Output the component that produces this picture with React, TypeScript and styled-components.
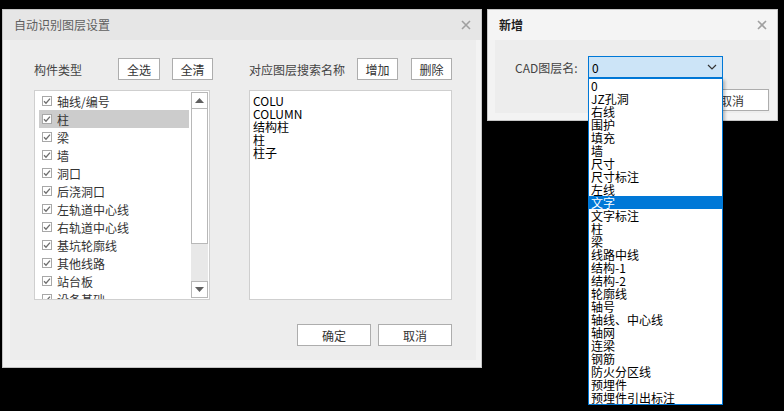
import React from 'react';
import styled, { createGlobalStyle } from 'styled-components';

const GlobalStyle = createGlobalStyle`
  html, body {
    margin: 0;
    padding: 0;
    background: #000;
  }
  body {
    font-family: "Noto Sans CJK SC", "Noto Sans", sans-serif;
    font-size: 12px;
    color: #333;
  }
`;

const Desktop = styled.div`
  position: relative;
  width: 784px;
  height: 411px;
  overflow: hidden;
  background: #000;
`;

const Window = styled.div<{ $left: number; $top: number; $width: number; $height: number }>`
  position: absolute;
  left: ${p => p.$left}px;
  top: ${p => p.$top}px;
  width: ${p => p.$width}px;
  height: ${p => p.$height}px;
  box-sizing: border-box;
  border: 1px solid #c6c6c6;
  background: #f3f3f3;
  display: flex;
  flex-direction: column;
`;

const TitleBar = styled.div<{ $bg: string }>`
  height: 30px;
  flex: none;
  display: flex;
  align-items: center;
  justify-content: space-between;
  padding: 0 10px 0 11px;
  background: ${p => p.$bg};
`;

const Title = styled.span<{ $bold?: boolean }>`
  font-size: 12px;
  line-height: 14px;
  color: ${p => (p.$bold ? '#1e1e1e' : '#5f5f5f')};
  font-weight: ${p => (p.$bold ? 700 : 400)};
`;

const CloseIcon = () => (
  <svg width="10" height="10" viewBox="0 0 10 10">
    <path d="M1 1 L9 9 M9 1 L1 9" stroke="#a0a0a0" strokeWidth="1.6" />
  </svg>
);

const WindowBody = styled.div`
  flex: 1;
  display: flex;
  padding: 0 7px 7px 7px;
`;

const Panel = styled.div<{ $pad: string }>`
  flex: 1;
  display: flex;
  flex-direction: column;
  background: #ededed;
  padding: ${p => p.$pad};
`;

const Columns = styled.div`
  display: flex;
  gap: 39px;
`;

const Column = styled.div<{ $width: number }>`
  width: ${p => p.$width}px;
  display: flex;
  flex-direction: column;
`;

const HeaderRow = styled.div`
  display: flex;
  align-items: center;
  height: 22px;
`;

const Label = styled.span<{ $width: number }>`
  width: ${p => p.$width}px;
  flex: none;
  font-size: 12px;
  color: #444;
  white-space: nowrap;
`;

const Button = styled.button<{ $width: number; $gap?: number }>`
  width: ${p => p.$width}px;
  height: 22px;
  margin-left: ${p => p.$gap ?? 0}px;
  flex: none;
  box-sizing: border-box;
  border: 1px solid #adadad;
  background: #fff;
  font-family: inherit;
  font-size: 12px;
  color: #333;
  padding: 0;
  display: flex;
  align-items: center;
  justify-content: center;
`;

const ListBox = styled.div`
  margin-top: 10px;
  height: 210px;
  box-sizing: border-box;
  border: 1px solid #cfcfcf;
  background: #fff;
  display: flex;
  overflow: hidden;
`;

const Items = styled.div`
  flex: 1;
  padding: 1px 2px 0 4px;
  overflow: hidden;
`;

const Item = styled.div<{ $selected?: boolean }>`
  height: 18px;
  display: flex;
  align-items: center;
  gap: 5px;
  padding-left: 3px;
  background: ${p => (p.$selected ? '#cccccc' : 'transparent')};
  color: #333;
  white-space: nowrap;
`;

const Check = styled.span`
  width: 10px;
  height: 10px;
  flex: none;
  box-sizing: border-box;
  border: 1px solid #a8a8a8;
  background: #fff;
  display: flex;
  align-items: center;
  justify-content: center;
`;

const Scrollbar = styled.div`
  width: 17px;
  margin: 1px 1px 1px 0;
  display: flex;
  flex-direction: column;
  background: #e8e8e8;
`;

const ScrollBtn = styled.div`
  height: 17px;
  box-sizing: border-box;
  border: 1px solid #b8b8b8;
  background: #fff;
  display: flex;
  align-items: center;
  justify-content: center;
`;

const Thumb = styled.div`
  height: 135px;
  box-sizing: border-box;
  border: 1px solid #b8b8b8;
  border-top: none;
  background: #fff;
`;

const Track = styled.div`
  flex: 1;
`;

const TextList = styled.div`
  margin-top: 10px;
  height: 210px;
  box-sizing: border-box;
  border: 1px solid #cfcfcf;
  background: #fff;
  padding: 3px 3px;
  font-size: 12px;
  line-height: 13px;
  color: #000;
`;

const Footer = styled.div<{ $top: number }>`
  display: flex;
  justify-content: flex-end;
  margin-top: ${p => p.$top}px;
`;

const FormRow = styled.div`
  display: flex;
  align-items: center;
`;

const Select = styled.div`
  position: relative;
  width: 135px;
  height: 22px;
  box-sizing: border-box;
  border: 1px solid #0078d7;
  background: #cce4f7;
  display: flex;
  align-items: center;
  justify-content: space-between;
  padding: 0 5px 0 3px;
  color: #000;
`;

const Dropdown = styled.div`
  position: absolute;
  left: -1px;
  top: 21px;
  width: 135px;
  box-sizing: border-box;
  border: 1px solid #0078d7;
  background: #fff;
  box-shadow: 2px 2px 3px rgba(0, 0, 0, 0.25);
  z-index: 5;
`;

const Option = styled.div<{ $selected?: boolean }>`
  height: 13px;
  line-height: 13px;
  padding-left: 2px;
  font-size: 12px;
  white-space: nowrap;
  background: ${p => (p.$selected ? '#0078d7' : '#fff')};
  color: ${p => (p.$selected ? '#fff' : '#000')};
`;

const CheckMark = () => (
  <svg width="8" height="8" viewBox="0 0 8 8">
    <path d="M1 4.2 L3 6.2 L7 1.6" fill="none" stroke="#6e6e6e" strokeWidth="1.3" />
  </svg>
);

const Arrow = ({ up }: { up?: boolean }) => (
  <svg width="9" height="5" viewBox="0 0 9 5">
    <path d={up ? 'M0 5 L4.5 0 L9 5 Z' : 'M0 0 L4.5 5 L9 0 Z'} fill="#606060" />
  </svg>
);

const Chevron = () => (
  <svg width="10" height="6" viewBox="0 0 10 6">
    <path d="M1 1 L5 5 L9 1" fill="none" stroke="#333" strokeWidth="1.2" />
  </svg>
);

const types = ['轴线/编号', '柱', '梁', '墙', '洞口', '后浇洞口', '左轨道中心线', '右轨道中心线', '基坑轮廓线', '其他线路', '站台板', '设备基础'];
const names = ['COLU', 'COLUMN', '结构柱', '柱', '柱子'];
const layers = [
  '0', 'JZ孔洞', '右线', '围护', '填充', '墙', '尺寸', '尺寸标注', '左线', '文字', '文字标注', '柱', '梁',
  '线路中线', '结构-1', '结构-2', '轮廓线', '轴号', '轴线、中心线', '轴网', '连梁', '钢筋', '防火分区线',
  '预埋件', '预埋件引出标注',
];

export default function App() {
  return (
    <Desktop>
      <GlobalStyle />
      <Window $left={2} $top={9} $width={480} $height={359}>
        <TitleBar $bg="#e6e6e6">
          <Title>自动识别图层设置</Title>
          <CloseIcon />
        </TitleBar>
        <WindowBody>
          <Panel $pad="18px 24px 14px 24px">
            <Columns>
              <Column $width={176}>
                <HeaderRow>
                  <Label $width={84}>构件类型</Label>
                  <Button $width={42}>全选</Button>
                  <Button $width={41} $gap={12}>全清</Button>
                </HeaderRow>
                <ListBox>
                  <Items>
                    {types.map(t => (
                      <Item key={t} $selected={t === '柱'}>
                        <Check><CheckMark /></Check>
                        {t}
                      </Item>
                    ))}
                  </Items>
                  <Scrollbar>
                    <ScrollBtn><Arrow up /></ScrollBtn>
                    <Thumb />
                    <Track />
                    <ScrollBtn><Arrow /></ScrollBtn>
                  </Scrollbar>
                </ListBox>
              </Column>
              <Column $width={203}>
                <HeaderRow>
                  <Label $width={108}>对应图层搜索名称</Label>
                  <Button $width={41}>增加</Button>
                  <Button $width={41} $gap={13}>删除</Button>
                </HeaderRow>
                <TextList>
                  {names.map(n => (
                    <div key={n}>{n}</div>
                  ))}
                </TextList>
              </Column>
            </Columns>
            <Footer $top={24}>
              <Button $width={74}>确定</Button>
              <Button $width={74} $gap={7}>取消</Button>
            </Footer>
          </Panel>
        </WindowBody>
      </Window>

      <Window $left={487} $top={9} $width={291} $height={112}>
        <TitleBar $bg="#f4f4f4">
          <Title $bold>新增</Title>
          <CloseIcon />
        </TitleBar>
        <WindowBody>
          <Panel $pad="16px 1px 0 20px">
            <FormRow>
              <Label $width={73}>CAD图层名:</Label>
              <Select>
                <span>0</span>
                <Chevron />
                <Dropdown>
                  {layers.map(l => (
                    <Option key={l} $selected={l === '文字'}>{l}</Option>
                  ))}
                </Dropdown>
              </Select>
            </FormRow>
            <Footer $top={11}>
              <Button $width={74}>确定</Button>
              <Button $width={74} $gap={7}>取消</Button>
            </Footer>
          </Panel>
        </WindowBody>
      </Window>
    </Desktop>
  );
}
